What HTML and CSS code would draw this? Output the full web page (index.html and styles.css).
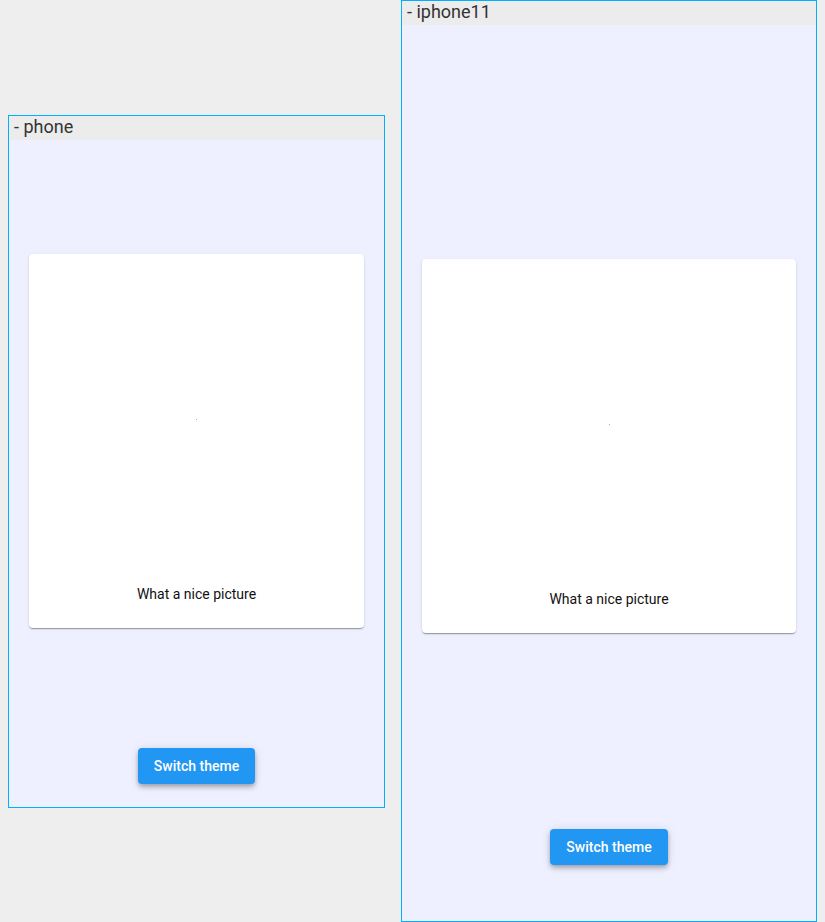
FILE: index.html
```html
<!DOCTYPE html>
<html>
<head>
<meta charset="utf-8">
<link rel="stylesheet" href="styles.css">
</head>
<body>
<div class="stage">
  <div class="device">
    <div class="device-label">- phone</div>
    <div class="screen screen-phone">
      <div class="card">
        <div class="card-image"><span class="pixel"></span></div>
        <div class="card-caption">What a nice picture</div>
      </div>
      <button class="btn">Switch theme</button>
    </div>
  </div>
  <div class="device">
    <div class="device-label">- iphone11</div>
    <div class="screen screen-iphone11">
      <div class="card">
        <div class="card-image"><span class="pixel"></span></div>
        <div class="card-caption">What a nice picture</div>
      </div>
      <button class="btn">Switch theme</button>
    </div>
  </div>
</div>
</body>
</html>
```

FILE: styles.css
```css
html, body {
  margin: 0;
  padding: 0;
  background: #eeeeee;
  font-family: Roboto, "Liberation Sans", sans-serif;
}

.stage {
  height: 922px;
  padding: 0 8px;
  display: flex;
  align-items: center;
  gap: 16px;
}

.device {
  border: 1px solid #00b0ff;
  background: #eef0ff;
  display: flex;
  flex-direction: column;
}

.device-label {
  height: 24px;
  line-height: 22px;
  padding-left: 5px;
  background: #ececec;
  color: #333333;
  font-size: 18px;
}

.screen {
  display: flex;
  flex-direction: column;
  align-items: center;
  box-sizing: border-box;
}

.screen-phone {
  width: 375px;
  height: 667px;
  padding-top: 114px;
  gap: 120px;
}

.screen-iphone11 {
  width: 414px;
  height: 896px;
  padding-top: 234px;
  gap: 196px;
}

.card {
  align-self: stretch;
  margin: 0 20px;
  height: 374px;
  background: #ffffff;
  border-radius: 4px;
  box-shadow: 0 2px 1px -1px rgba(0,0,0,0.2), 0 1px 1px 0 rgba(0,0,0,0.14), 0 1px 3px 0 rgba(0,0,0,0.12);
  display: flex;
  flex-direction: column;
}

.card-image {
  height: 331px;
  display: flex;
  align-items: center;
  justify-content: center;
}

.pixel {
  width: 1px;
  height: 1px;
  background: #f08a8a;
}

.card-caption {
  height: 20px;
  line-height: 20px;
  margin-top: -1px;
  text-align: center;
  font-size: 14px;
  color: #111111;
}

.btn {
  height: 36px;
  padding: 0 16px;
  border: none;
  border-radius: 4px;
  background: #2196f3;
  color: #ffffff;
  font-family: Roboto, "Liberation Sans", sans-serif;
  font-size: 14px;
  font-weight: 500;
  box-shadow: 0 2px 4px -1px rgba(0,0,0,0.2), 0 4px 5px 0 rgba(0,0,0,0.14), 0 1px 10px 0 rgba(0,0,0,0.12);
}
```
